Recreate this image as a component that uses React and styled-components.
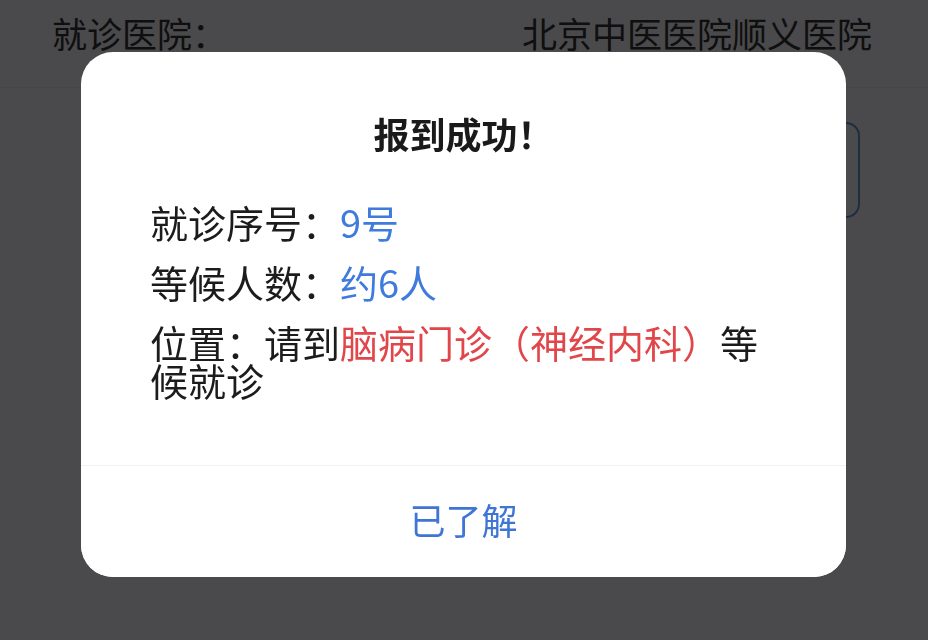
import styled, { createGlobalStyle } from 'styled-components'

const GlobalStyle = createGlobalStyle`
  html, body {
    margin: 0;
    padding: 0;
    height: 100%;
  }

  body {
    font-family: 'Noto Sans CJK SC', 'Noto Sans', sans-serif;
    background: #f7f7fd;
  }
`

const Page = styled.div`
  width: 928px;
  height: 640px;
  overflow: hidden;
  background: #f7f7fd;
`

const InfoRow = styled.div`
  display: flex;
  justify-content: space-between;
  align-items: center;
  padding: 13px 56px 34px 52px;
  border-bottom: 1px solid #e9e9ef;
  font-size: 35px;
  line-height: 40px;
  color: #333;
`

const ActionRow = styled.div`
  display: flex;
  justify-content: flex-end;
  padding: 34px 68px 0 52px;
`

const OutlineButton = styled.div`
  width: 200px;
  height: 96px;
  box-sizing: border-box;
  border: 2px solid #6b93d8;
  border-radius: 14px;
  background: #f9faff;
`

const Overlay = styled.div`
  position: fixed;
  inset: 0;
  display: flex;
  justify-content: center;
  align-items: flex-start;
  padding: 52px 1px 0 0;
  background: rgba(0, 0, 0, 0.7);
`

const Dialog = styled.div`
  width: 765px;
  background: #fff;
  border-radius: 32px;
  overflow: hidden;
`

const Body = styled.div`
  padding: 63px 69px 66px;
`

const Title = styled.h2`
  margin: 0 0 52px;
  text-align: center;
  font-size: 36px;
  line-height: 36px;
  font-weight: 700;
  color: #1a1a1a;
`

const Items = styled.div`
  display: flex;
  flex-direction: column;
  gap: 22px;
`

const Item = styled.p`
  margin: 0;
  font-size: 38px;
  line-height: 38px;
  color: #1c1c1c;
`

const Mark = styled.span`
  color: ${(props) => (props.$tone === 'red' ? '#e1474a' : '#3f7bdc')};
`

const Footer = styled.button`
  display: flex;
  justify-content: center;
  align-items: center;
  width: 100%;
  height: 112px;
  padding: 0 0 6px;
  border: none;
  border-top: 1px solid #f0f1f4;
  background: #fff;
  font-family: inherit;
  font-size: 36px;
  color: #3f76d6;
  cursor: pointer;
`

function App() {
  return (
    <>
      <GlobalStyle />
      <Page>
        <InfoRow>
          <span>就诊医院：</span>
          <span>北京中医医院顺义医院</span>
        </InfoRow>
        <ActionRow>
          <OutlineButton />
        </ActionRow>
      </Page>
      <Overlay>
        <Dialog>
          <Body>
            <Title>报到成功！</Title>
            <Items>
              <Item>
                就诊序号：<Mark>9号</Mark>
              </Item>
              <Item>
                等候人数：<Mark>约6人</Mark>
              </Item>
              <Item>
                位置：请到<Mark $tone='red'>脑病门诊（神经内科）</Mark>等候就诊
              </Item>
            </Items>
          </Body>
          <Footer>已了解</Footer>
        </Dialog>
      </Overlay>
    </>
  )
}

export default App
